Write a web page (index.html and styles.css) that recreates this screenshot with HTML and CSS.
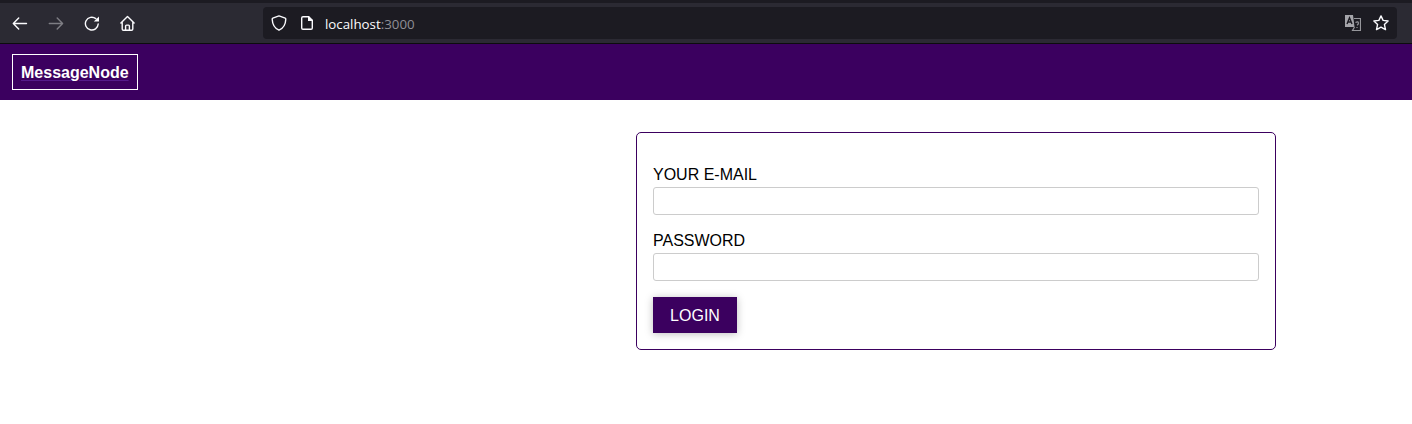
FILE: index.html
```html
<!DOCTYPE html>
<html lang="en">
<head>
<meta charset="utf-8">
<title>MessageNode</title>
<link rel="stylesheet" href="styles.css">
</head>
<body>
<div class="browser">
  <div class="nav">
    <svg class="icon" viewBox="0 0 16 16"><path d="M14.5 8.5H1.5M6.7 3L1.3 8.5L6.7 14"/></svg>
    <svg class="icon dim" viewBox="0 0 16 16"><path d="M1.3 8.5H14.3M9.2 3L14.6 8.5L9.2 14"/></svg>
    <svg class="icon" viewBox="0 0 16 16"><path d="M14.2 9A6.4 6.4 0 1 1 11.8 3.6"/><path class="solid" d="M15 1.5V6.5H9.8Z"/></svg>
    <svg class="icon" viewBox="0 0 16 16"><path d="M.9 8L7.5 1.5L14.1 8M2.2 7V14Q2.2 15.3 3.5 15.3H11.5Q12.8 15.3 12.8 14V7M5.6 15V11Q5.6 10.1 6.5 10.1H8.5Q9.4 10.1 9.4 11V15"/></svg>
  </div>
  <div class="address">
    <svg class="icon" viewBox="0 0 16 16"><path d="M8 .9L14.2 3.2Q14.9 3.5 14.8 4.3C14.6 9 12.5 13.3 8 15.2C3.5 13.3 1.4 9 1.2 4.3Q1.1 3.5 1.8 3.2Z"/></svg>
    <svg class="icon page" viewBox="0 0 16 16"><path d="M9.5 1.7H4Q2.7 1.7 2.7 3V13Q2.7 14.3 4 14.3H12Q13.3 14.3 13.3 13V5.5"/><path class="solid" d="M9 1H10L14 5V6H9Z"/></svg>
    <span class="url">localhost<span class="port">:3000</span></span>
    <svg class="translate" viewBox="0 0 16 16"><path class="back" d="M0 0H8L9.5 12H0Z"/><path class="glyph" d="M2 9L4.5 2.8L7 9M3 7H6"/><path class="front" d="M9 3.5H15.5V15.5H7.5L9.5 12"/><path class="front" d="M10.5 7.5Q13.4 6 13.4 8.2Q13.4 9.4 12 10.3M11.4 12.5H12.6"/></svg>
    <svg class="icon" viewBox="0 0 16 16"><path d="M8 .9L10.1 5.4L15.1 6L11.4 9.4L12.5 14.6L8 12.1L3.5 14.6L4.6 9.4L.9 6L5.9 5.4Z"/></svg>
  </div>
</div>
<header class="header"><a class="logo" href="#">MessageNode</a></header>
<main class="main">
  <form class="card">
    <label class="label" for="email">YOUR E-MAIL</label>
    <input class="input" id="email" type="email">
    <label class="label" for="password">PASSWORD</label>
    <input class="input" id="password" type="password">
    <button class="button" type="submit">LOGIN</button>
  </form>
</main>
</body>
</html>
```
FILE: styles.css
```css
* { box-sizing: border-box; }
body {
  margin: 0;
  background: #fff;
  font: 16px/18px "Liberation Sans", Arial, sans-serif;
}
.browser {
  display: flex;
  height: 44px;
  padding: 4px 15px 4px 12px;
  background: #2b2a33;
  border-top: 3px solid #1c1b22;
  border-bottom: 1px solid #0c0c0d;
}
.nav {
  display: flex;
  align-items: center;
  gap: 20px;
  width: 251px;
}
.icon {
  flex: none;
  width: 16px;
  height: 16px;
  fill: none;
  stroke: #fbfbfe;
  stroke-width: 1.4;
  stroke-linecap: round;
  stroke-linejoin: round;
}
.dim { opacity: .4; }
.solid { fill: #fbfbfe; stroke: none; }
.address {
  display: flex;
  align-items: center;
  flex: 1;
  height: 32px;
  padding: 0 8px;
  background: #1c1b22;
  border-radius: 4px;
}
.page { margin-left: 12px; }
.url {
  flex: 1;
  margin-left: 10px;
  padding-top: 2px;
  color: #fbfbfe;
  font: 13.3px/18px "Open Sans", sans-serif;
}
.port { color: #8f8f96; }
.translate {
  width: 16px;
  height: 16px;
  margin-right: 12px;
  fill: none;
}
.back { fill: #a5a5aa; }
.glyph { stroke: #1c1b22; stroke-width: 1.4; }
.front { stroke: #96969b; stroke-width: 1.2; }
.header {
  display: flex;
  align-items: center;
  height: 56px;
  padding: 0 12px;
  background: #3b005f;
}
.logo {
  height: 36px;
  padding: 9px 8px 7px;
  border: 1px solid #fff;
  color: #fff;
  font-weight: bold;
  text-decoration: underline #551a8b 1px;
  text-underline-offset: 2px;
}
.main { padding: 32px 136px 0 636px; }
.card {
  display: flex;
  flex-direction: column;
  height: 218px;
  padding: 32px 16px 16px;
  border: 1px solid #3b005f;
  border-radius: 5px;
}
.label { height: 22px; padding-top: 1px; color: #000; }
.input {
  width: 100%;
  height: 28px;
  margin: 0 0 16px;
  padding: 4px;
  border: 1px solid #ccc;
  border-radius: 3px;
  background: #fff;
  font: inherit;
  outline: none;
}
.button {
  align-self: flex-start;
  width: 84px;
  height: 36px;
  padding: 2px 0 0;
  border: 1px solid #3b005f;
  background: #3b005f;
  color: #fff;
  font: inherit;
  box-shadow: 0 1px 8px rgba(0, 0, 0, .26);
}
```
